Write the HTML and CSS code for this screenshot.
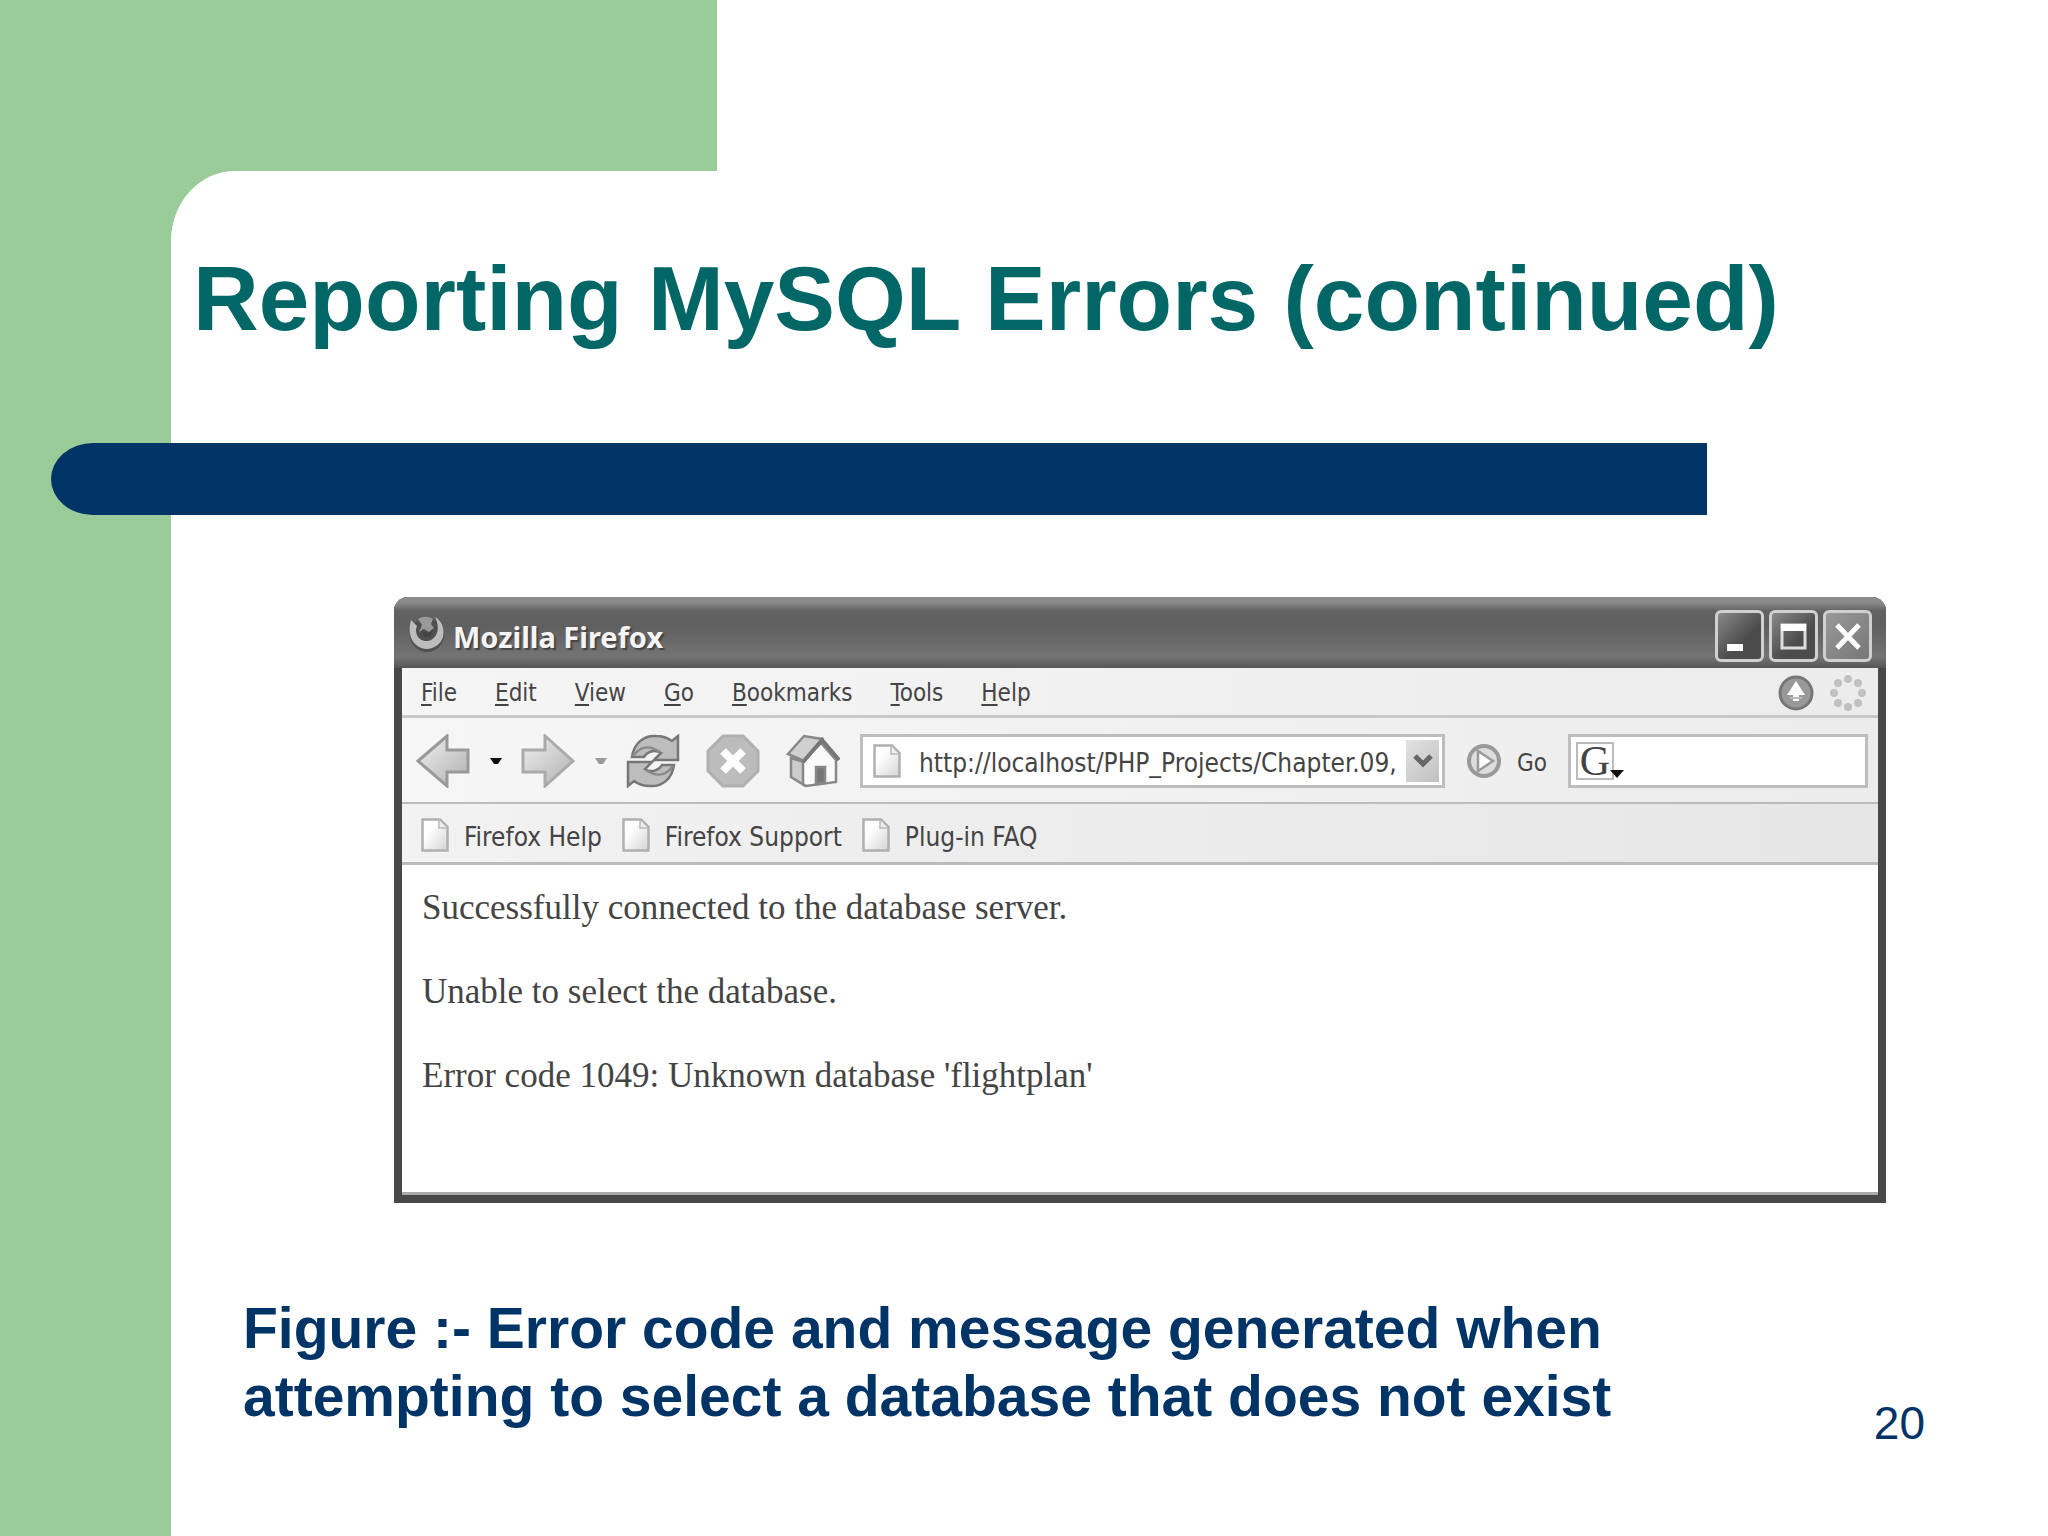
FILE: index.html
```
<!DOCTYPE html>
<html lang="en">
<head>
    <meta charset="UTF-8">
    <meta name="viewport" content="width=device-width, initial-scale=1.0">
    <title>Reporting MySQL Errors (continued)</title>
    <link rel="stylesheet" href="styles.css">
</head>
<body>

<svg class="defs" width="0" height="0" aria-hidden="true">
    <defs>
        <linearGradient id="grey" x1="0" y1="0" x2="1" y2="1">
            <stop offset="0" stop-color="#f0f0f0"/>
            <stop offset="1" stop-color="#b0b0b0"/>
        </linearGradient>
        <linearGradient id="paper" x1="0" y1="0" x2="1" y2="1">
            <stop offset="0.3" stop-color="#ffffff"/>
            <stop offset="1" stop-color="#d4d4d4"/>
        </linearGradient>
        <symbol id="page" viewBox="0 0 28 34">
            <path d="M1.5 1.5H19L26.500 9V32.500H1.500Z" fill="url(#paper)" stroke="#b0b0b0" stroke-width="2.500"/>
            <path d="M18 2V10H26" fill="#eee" stroke="#bbb" stroke-width="1.500"/>
        </symbol>
    </defs>
</svg>

<div class="top"></div>

<main class="slide">
    <h1>Reporting MySQL Errors (continued)</h1>
    <div class="bar"></div>

    <figure>
        <div class="window">
            <div class="titlebar">
                <svg class="fox" viewBox="0 0 38 38">
                    <circle cx="19" cy="20" r="17" fill="#505050"/>
                    <path d="M3 5C0 16 2 27 11 32C20 37 32 32 35 22C37 13 33 5 27 2C30 8 31 15 28 20C25 26 17 28 12 24C8 21 7 15 9 11Z" fill="#bdbdbd"/>
                    <path d="M10 4C15 1 21 1 25 4L23 9L26 13L21 17L16 14L11 17L14 10Z" fill="#999"/>
                    <path d="M14 14L19 18L25 15L22 22H16Z" fill="#444"/>
                </svg>
                <span class="caption">Mozilla Firefox</span>
                <button class="win-btn" aria-label="Minimize">
                    <svg viewBox="0 0 40 40"><path d="M7 28H23V35H7Z" fill="#fff"/></svg>
                </button>
                <button class="win-btn" aria-label="Maximize">
                    <svg viewBox="0 0 40 40"><path d="M8 9H31V32H8Z" fill="none" stroke="#ddd" stroke-width="3"/><path d="M7 8H32V15H7Z" fill="#fff"/></svg>
                </button>
                <button class="win-btn close" aria-label="Close">
                    <svg viewBox="0 0 40 40"><path d="M9 9L31 32M31 9L9 32" stroke="#fff" stroke-width="5"/></svg>
                </button>
            </div>

            <div class="menubar">
                <button><u>F</u>ile</button>
                <button><u>E</u>dit</button>
                <button><u>V</u>iew</button>
                <button><u>G</u>o</button>
                <button><u>B</u>ookmarks</button>
                <button><u>T</u>ools</button>
                <button><u>H</u>elp</button>
                <div class="status">
                    <svg viewBox="0 0 36 36">
                        <circle cx="18" cy="18" r="16" fill="#999" stroke="#777" stroke-width="3"/>
                        <path d="M18 6L27 20H21V26H15V20H9Z" fill="#fff"/>
                        <path d="M12 23H24" stroke="#bbb" stroke-width="2"/>
                    </svg>
                    <svg viewBox="0 0 36 36" fill="#c0c0c0">
                        <circle cx="18" cy="4" r="4"/><circle cx="28" cy="8" r="4"/>
                        <circle cx="32" cy="18" r="4"/><circle cx="28" cy="28" r="4"/>
                        <circle cx="18" cy="32" r="4"/><circle cx="8" cy="28" r="4"/>
                        <circle cx="4" cy="18" r="4"/><circle cx="8" cy="8" r="4"/>
                    </svg>
                </div>
            </div>

            <div class="toolbar">
                <button class="tool" aria-label="Back">
                    <svg viewBox="0 0 54 54"><path d="M2 27L31 2V16H52V38H31V52Z" fill="url(#grey)" stroke="#999" stroke-width="3"/></svg>
                </button>
                <button class="drop" aria-label="Back history"><svg viewBox="0 0 12 6"><path d="M0 0H12L8 6H4Z" fill="#111"/></svg></button>
                <button class="tool" aria-label="Forward">
                    <svg viewBox="0 0 54 54"><path d="M52 27L24 2V16H2V38H24V52Z" fill="url(#grey)" stroke="#aaa" stroke-width="3"/></svg>
                </button>
                <button class="drop" aria-label="Forward history"><svg viewBox="0 0 12 6"><path d="M0 0H12L8 6H4Z" fill="#999"/></svg></button>
                <button class="tool reload" aria-label="Reload">
                    <svg viewBox="0 0 54 54" stroke="#777" stroke-width="2.500">
                        <path d="M6 23C8 9 18 1 30 2C37 2 42 4 46 7L52 2V26H28L35 19C28 14 20 19 18 23Z" fill="#bdbdbd"/>
                        <path d="M48 31C46 45 36 53 24 52C17 52 12 50 8 47L2 52V28H26L19 35C26 40 34 35 36 31Z" fill="#bdbdbd"/>
                        <path d="M7 22C16 10 25 12 34 18M47 32C38 44 29 42 20 36" fill="none" stroke="#8a8a8a"/>
                    </svg>
                </button>
                <button class="tool" aria-label="Stop">
                    <svg viewBox="0 0 54 54">
                        <path d="M17 2H37L52 17V37L37 52H17L2 37V17Z" fill="#bcbcbc" stroke="#b0b0b0" stroke-width="3"/>
                        <path d="M17 17L37 37M37 17L17 37" stroke="#fff" stroke-width="8"/>
                    </svg>
                </button>
                <button class="tool" aria-label="Home">
                    <svg viewBox="0 0 54 54" stroke="#888" stroke-width="2.500">
                        <path d="M5 24L18 28V51L5 43Z" fill="#ccc"/>
                        <path d="M17 27L35 9L50 26V48L20 52L17 50Z" fill="#fafafa"/>
                        <path d="M2 20L18 2L36 5L18 27Z" fill="#d0d0d0"/>
                        <path d="M17 28L36 6L53 26" fill="none" stroke="#777" stroke-width="4"/>
                        <path d="M30 50V33H39V49Z" fill="#777"/>
                    </svg>
                </button>
                <div class="address">
                    <svg class="page"><use href="#page"/></svg>
                    <input type="text" aria-label="Address" value="http://localhost/PHP_Projects/Chapter.09,">
                    <button aria-label="Show addresses"><svg viewBox="0 0 20 14"><path d="M2 2L10 10L18 2" fill="none" stroke="#666" stroke-width="5"/></svg></button>
                </div>
                <button class="go">
                    <svg viewBox="0 0 36 36">
                        <circle cx="18" cy="18" r="15" fill="#ddd" stroke="#999" stroke-width="4"/>
                        <path d="M12 8L27 18L12 28Z" fill="#fff" stroke="#999" stroke-width="2.500"/>
                    </svg>
                    <span>Go</span>
                </button>
                <div class="search">
                    <button class="engine" aria-label="Search engine">G<svg viewBox="0 0 14 8"><path d="M0 0H14L7 8Z" fill="#111"/></svg></button>
                    <input type="text" aria-label="Search">
                </div>
            </div>

            <nav class="bookmarks">
                <a href="#"><svg class="page"><use href="#page"/></svg><span>Firefox Help</span></a>
                <a href="#"><svg class="page"><use href="#page"/></svg><span>Firefox Support</span></a>
                <a href="#"><svg class="page"><use href="#page"/></svg><span>Plug-in FAQ</span></a>
            </nav>

            <div class="content">
                <p>Successfully connected to the database server.</p>
                <p>Unable to select the database.</p>
                <p>Error code 1049: Unknown database 'flightplan'</p>
            </div>
        </div>

        <figcaption>Figure :- Error code and message generated when attempting to select a database that does not exist</figcaption>
    </figure>

    <footer>20</footer>
</main>

</body>
</html>
```
FILE: styles.css
```
* {
    box-sizing: border-box;
}

body {
    margin: 0;
    min-height: 100vh;
    display: flex;
    flex-direction: column;
    font-family: "Liberation Sans", Arial, sans-serif;
    background: #99cc99;
    color: #003366;
}

.defs {
    position: absolute;
}

.top {
    height: 171px;
    margin-left: 35%;
    background: white;
}

.slide {
    flex: 1;
    position: relative;
    margin-left: 171px;
    background: white;
    border-top-left-radius: 64px 70px;
}

h1 {
    margin: 0;
    padding: 76px 0 92px 22px;
    font-size: 91px;
    line-height: 104px;
    color: #006666;
}

.bar {
    height: 72px;
    margin: 0 341px 82px -120px;
    background: #003366;
    border-radius: 42px 0 0 42px / 36px 0 0 36px;
}

figure {
    margin: 0 162px 0 72px;
}

.window {
    margin-left: 151px;
    border: 8px solid #484848;
    border-top: none;
    border-radius: 14px 14px 0 0;
    background: #484848;
    font-family: "DejaVu Sans Condensed", Tahoma, sans-serif;
    font-size: 24px;
    color: #444;
}

button, input {
    font: inherit;
    color: inherit;
    border: none;
    padding: 0;
    background: none;
}

svg {
    display: block;
}

/* title bar */
.titlebar {
    display: flex;
    align-items: center;
    gap: 5px;
    height: 71px;
    margin: 0 -8px;
    padding: 6px 14px 0 14px;
    border-radius: 14px 14px 0 0;
    background: linear-gradient(#8e8e8e 0, #8a8a8a 6px, #626262 14px, #606060 30px, #747474 60px, #555 71px);
}

.fox {
    width: 38px;
    height: 38px;
    margin-bottom: 4px;
}

.caption {
    flex: 1;
    padding: 2px 0 0 2px;
    font-family: "Noto Sans", sans-serif;
    font-size: 29px;
    font-weight: bold;
    color: #f4f4f4;
    text-shadow: 2px 2px 1px #444;
}

.win-btn {
    width: 49px;
    height: 52px;
    border: 3px solid #d0d0d0;
    border-radius: 6px;
    background: linear-gradient(135deg, #8a8a8a, #4c4c4c 60%);
}

.win-btn svg {
    width: 40px;
    height: 40px;
    margin: auto;
}

.close {
    background: linear-gradient(135deg, #999, #777);
}

/* menu */
.menubar {
    display: flex;
    align-items: center;
    gap: 38px;
    height: 50px;
    padding: 2px 12px 0 19px;
    border-bottom: 3px solid #c8c8c8;
    background: linear-gradient(90deg, #f5f5f5, #ececec);
}

.menubar u {
    text-underline-offset: 3px;
    text-decoration-thickness: 2px;
}

.status {
    display: flex;
    gap: 16px;
    margin-left: auto;
}

.status svg {
    width: 36px;
    height: 36px;
}

/* navigation */
.toolbar {
    display: flex;
    align-items: center;
    height: 86px;
    padding: 2px 10px 0 14px;
    border-bottom: 2px solid #bbb;
    background: linear-gradient(90deg, #f6f6f6, #ececec);
}

.tool {
    flex: none;
    margin-right: 26px;
}

.tool svg {
    width: 54px;
    height: 54px;
}

.tool:has(+ .drop), .tool:has(+ .address) {
    margin-right: 20px;
}

.drop {
    width: 12px;
    margin-right: 19px;
}

.page {
    flex: none;
    width: 28px;
    height: 34px;
}

.address, .search {
    display: flex;
    align-items: center;
    height: 54px;
    border: 3px solid #bdbdbd;
    background: white;
}

.address {
    flex: 1;
    padding: 2px 3px 2px 10px;
}

.address input {
    flex: 1;
    min-width: 0;
    padding: 4px 0 0 18px;
    font-size: 26px;
}

.address button {
    width: 33px;
    height: 42px;
    background: linear-gradient(135deg, #e2e2e2, #c0c0c0);
}

.address button svg {
    width: 20px;
    margin: auto;
}

.go {
    display: flex;
    align-items: center;
    gap: 15px;
    margin: 0 21px;
}

.go span, .bookmarks span {
    padding-top: 4px;
}

.go svg {
    width: 36px;
    height: 36px;
}

.search {
    width: 300px;
    padding-left: 5px;
}

.engine {
    position: relative;
    width: 38px;
    height: 38px;
    border: 2px solid #bbb;
    font-family: "Liberation Serif", serif;
    font-size: 42px;
    line-height: 34px;
}

.engine svg {
    position: absolute;
    right: -12px;
    bottom: 0;
    width: 14px;
    height: 8px;
}

.search input {
    flex: 1;
    min-width: 0;
    padding-left: 16px;
}

/* bookmarks */
.bookmarks {
    display: flex;
    align-items: center;
    gap: 20px;
    height: 61px;
    padding: 4px 0 0 19px;
    border-bottom: 3px solid #bbb;
    background: linear-gradient(90deg, #f2f2f2, #e6e6e6);
    font-size: 26px;
}

.bookmarks a {
    display: flex;
    align-items: center;
    gap: 15px;
    color: inherit;
    text-decoration: none;
}

/* page */
.content {
    min-height: 330px;
    padding: 22px 20px;
    border-bottom: 3px solid #aaa;
    background: white;
    font-family: "Liberation Serif", "Times New Roman", serif;
    font-size: 35px;
    line-height: 42px;
}

.content p {
    margin: 0 0 42px;
}

.content p:last-child {
    margin-bottom: 0;
}

figcaption {
    max-width: 1440px;
    padding-top: 91px;
    font-size: 57px;
    font-weight: bold;
    line-height: 68px;
}

footer {
    position: absolute;
    right: 123px;
    bottom: 87px;
    font-size: 46px;
    line-height: 52px;
}
```
